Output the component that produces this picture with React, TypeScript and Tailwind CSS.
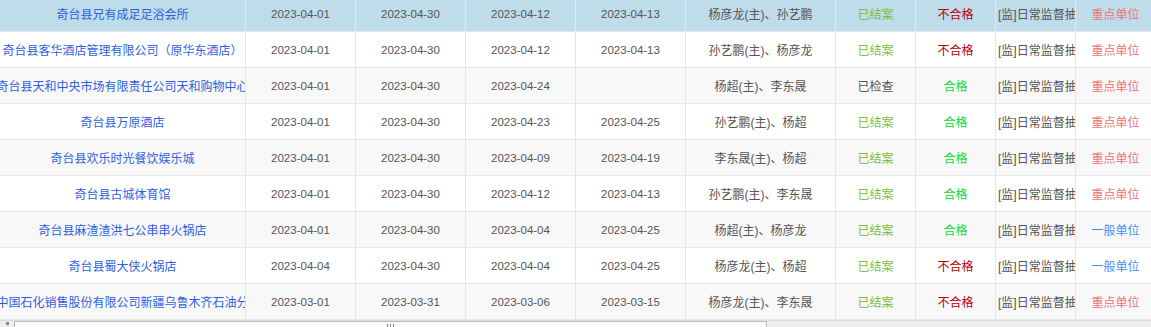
import React from "react";

type Row = {
  name: string;
  d1: string;
  d2: string;
  d3: string;
  d4: string;
  people: string;
  status: string;
  result: string;
  unit: string;
};

const rows: Row[] = [
  { name: "奇台县兄有成足足浴会所", d1: "2023-04-01", d2: "2023-04-30", d3: "2023-04-12", d4: "2023-04-13", people: "杨彦龙(主)、孙艺鹏", status: "已结案", result: "不合格", unit: "重点单位" },
  { name: "奇台县客华酒店管理有限公司（原华东酒店）", d1: "2023-04-01", d2: "2023-04-30", d3: "2023-04-12", d4: "2023-04-13", people: "孙艺鹏(主)、杨彦龙", status: "已结案", result: "不合格", unit: "重点单位" },
  { name: "奇台县天和中央市场有限责任公司天和购物中心", d1: "2023-04-01", d2: "2023-04-30", d3: "2023-04-24", d4: "", people: "杨超(主)、李东晟", status: "已检查", result: "合格", unit: "重点单位" },
  { name: "奇台县万原酒店", d1: "2023-04-01", d2: "2023-04-30", d3: "2023-04-23", d4: "2023-04-25", people: "孙艺鹏(主)、杨超", status: "已结案", result: "合格", unit: "重点单位" },
  { name: "奇台县欢乐时光餐饮娱乐城", d1: "2023-04-01", d2: "2023-04-30", d3: "2023-04-09", d4: "2023-04-19", people: "李东晟(主)、杨超", status: "已结案", result: "合格", unit: "重点单位" },
  { name: "奇台县古城体育馆", d1: "2023-04-01", d2: "2023-04-30", d3: "2023-04-12", d4: "2023-04-13", people: "孙艺鹏(主)、李东晟", status: "已结案", result: "合格", unit: "重点单位" },
  { name: "奇台县麻渣渣洪七公串串火锅店", d1: "2023-04-01", d2: "2023-04-30", d3: "2023-04-04", d4: "2023-04-25", people: "杨超(主)、杨彦龙", status: "已结案", result: "合格", unit: "一般单位" },
  { name: "奇台县蜀大侠火锅店", d1: "2023-04-04", d2: "2023-04-30", d3: "2023-04-04", d4: "2023-04-25", people: "杨彦龙(主)、杨超", status: "已结案", result: "不合格", unit: "一般单位" },
  { name: "中国石化销售股份有限公司新疆乌鲁木齐石油分", d1: "2023-03-01", d2: "2023-03-31", d3: "2023-03-06", d4: "2023-03-15", people: "杨彦龙(主)、李东晟", status: "已结案", result: "不合格", unit: "重点单位" },
];

const font = { fontFamily: '"Liberation Sans", "Noto Sans CJK SC", sans-serif' };

export default function App() {
  return (
    <div
      className="w-[1151px] h-[327px] overflow-hidden bg-white flex flex-col text-[12px] leading-none"
      style={font}
    >
      <div className="h-[320px] overflow-hidden">
        <div className="-mt-[4px] w-[1155px]">
          {rows.map((r, i) => {
            const hi = i === 0;
            const bg = hi ? "bg-[#bedcea]" : i % 2 === 0 ? "bg-[#f8f8f8]" : "bg-white";
            const bc = hi ? "border-[#d8eaf3]" : "border-[#e6e6e6]";
            const cell = `h-full flex items-center justify-center pt-[2px] border-r ${bc} shrink-0 overflow-hidden whitespace-nowrap`;
            return (
              <div key={i} className={`flex h-[36px] border-b border-[#e6e6e6] ${bg}`}>
                <div className={`${cell} w-[246px]`}>
                  <span className="shrink-0 text-[#2f5fe0]">{r.name}</span>
                </div>
                <div className={`${cell} w-[110px] text-[#555] text-[11.5px]`}>{r.d1}</div>
                <div className={`${cell} w-[110px] text-[#555] text-[11.5px]`}>{r.d2}</div>
                <div className={`${cell} w-[110px] text-[#555] text-[11.5px]`}>{r.d3}</div>
                <div className={`${cell} w-[110px] text-[#555] text-[11.5px]`}>{r.d4}</div>
                <div className={`${cell} w-[150px] text-[#555]`}>{r.people}</div>
                <div className={`${cell} w-[80px] ${r.status === "已结案" ? "text-[#7cbf3f]" : "text-[#555]"}`}>
                  {r.status}
                </div>
                <div className={`${cell} w-[80px] ${r.result === "不合格" ? "text-[#b80000]" : "text-[#10d83a]"}`}>
                  {r.result}
                </div>
                <div className={`h-full w-[80px] shrink-0 border-r ${bc} overflow-hidden whitespace-nowrap flex items-center pt-[2px] pl-[2px] text-[#555]`}>
                  <span className="shrink-0">[监]日常监督抽查</span>
                </div>
                <div className={`${cell} w-[80px] ${r.unit === "重点单位" ? "text-[#f07272]" : "text-[#3f8ff0]"}`}>
                  {r.unit}
                </div>
              </div>
            );
          })}
        </div>
      </div>
      <div className="h-[7px] flex bg-[#eeeeee] border-t border-[#dcdcdc]">
        <div className="w-[14px] shrink-0 flex justify-center pt-[1px]">
          <div className="w-[3px] h-[3px] bg-[#888]" />
        </div>
        <div className="w-[753px] shrink-0 bg-[#fafafa] border-l border-r border-t border-[#b9b9b9] flex justify-center pt-[2px] gap-[2px]">
          <div className="w-px h-[4px] bg-[#888]" />
          <div className="w-px h-[4px] bg-[#888]" />
          <div className="w-px h-[4px] bg-[#888]" />
        </div>
        <div className="flex-1" />
      </div>
    </div>
  );
}
